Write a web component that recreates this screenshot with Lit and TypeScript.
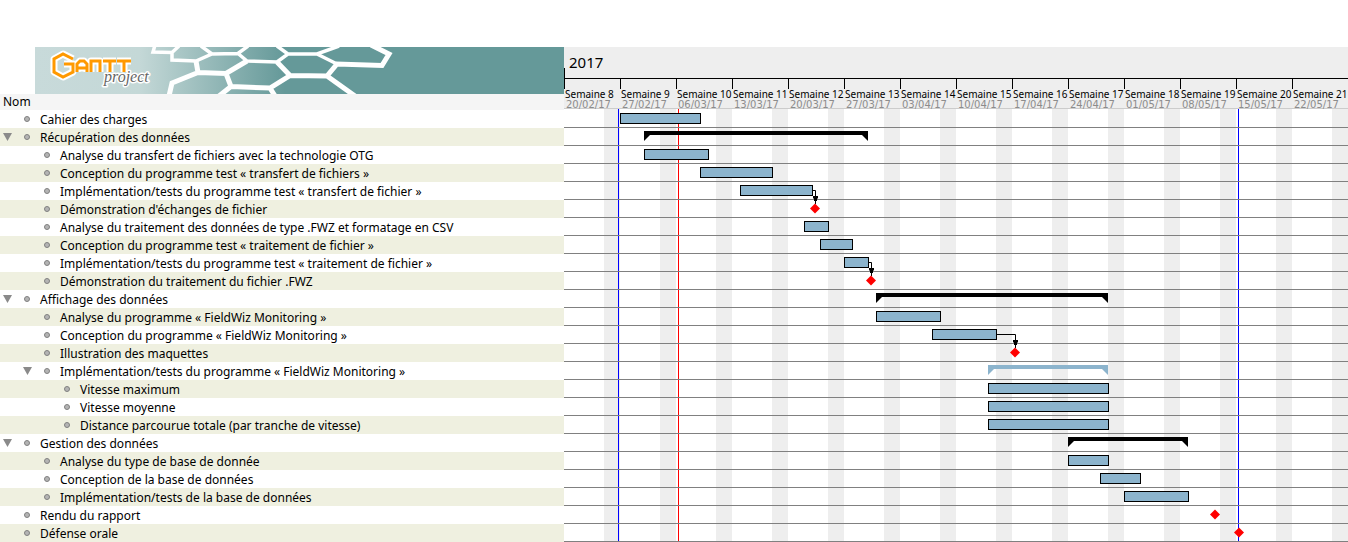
import { LitElement, html, css, svg, nothing } from "lit";
import { customElement, property, state } from "lit/decorators.js";
import { styleMap } from "lit/directives/style-map.js";
import { classMap } from "lit/directives/class-map.js";

type Kind = "task" | "summary" | "subsummary" | "milestone";

interface Task {
  name: string;
  level: number;
  kind: Kind;
  start: number;
  days: number;
  linkDays?: number;
}

const DAY = 8;

const task = (level: number, name: string, start: number, days: number, linkDays?: number): Task => ({
  name, level, kind: "task", start, days, linkDays,
});
const group = (level: number, name: string, start: number, days: number, kind: Kind = "summary"): Task => ({
  name, level, kind, start, days,
});
const milestone = (level: number, name: string, start: number): Task => ({
  name, level, kind: "milestone", start, days: 0,
});

const TASKS: Task[] = [
  task(0, "Cahier des charges", 7, 10),
  group(0, "Récupération des données", 10, 28),
  task(1, "Analyse du transfert de fichiers avec la technologie OTG", 10, 8),
  task(1, "Conception du programme test « transfert de fichiers »", 17, 9),
  task(1, "Implémentation/tests du programme test « transfert de fichier »", 22, 9, 31),
  milestone(1, "Démonstration d'échanges de fichier", 31),
  task(1, "Analyse du traitement des données de type .FWZ et formatage en CSV", 30, 3),
  task(1, "Conception du programme test « traitement de fichier »", 32, 4),
  task(1, "Implémentation/tests du programme test « traitement de fichier »", 35, 3, 38),
  milestone(1, "Démonstration du traitement du fichier .FWZ", 38),
  group(0, "Affichage des données", 39, 29),
  task(1, "Analyse du programme « FieldWiz Monitoring »", 39, 8),
  task(1, "Conception du programme « FieldWiz Monitoring »", 46, 8, 56),
  milestone(1, "Illustration des maquettes", 56),
  group(1, "Implémentation/tests du programme « FieldWiz Monitoring »", 53, 15, "subsummary"),
  task(2, "Vitesse maximum", 53, 15),
  task(2, "Vitesse moyenne", 53, 15),
  task(2, "Distance parcourue totale (par tranche de vitesse)", 53, 15),
  group(0, "Gestion des données", 63, 15),
  task(1, "Analyse du type de base de donnée", 63, 5),
  task(1, "Conception de la base de données", 67, 5),
  task(1, "Implémentation/tests de la base de données", 70, 8),
  milestone(0, "Rendu du rapport", 81),
  milestone(0, "Défense orale", 84),
];

const WEEKS = [
  "20/02/17", "27/02/17", "06/03/17", "13/03/17", "20/03/17", "27/03/17", "03/04/17",
  "10/04/17", "17/04/17", "24/04/17", "01/05/17", "08/05/17", "15/05/17", "22/05/17",
].map((date, i) => ({ label: `Semaine ${8 + i}`, date }));

@customElement("gantt-banner")
class GanttBanner extends LitElement {
  static styles = css`
    :host { display: block; padding-left: 35px; }
    .banner { display: block; width: 100%; height: 47px; }
    .project { font: italic 16px "Liberation Serif", serif; fill: #666; stroke: #fff; stroke-width: 3px; paint-order: stroke; stroke-linejoin: round; }
  `;
  render() {
    const far = "M120 -2 L118 5 L137 5.500 L144 -1 M137 5.500 V13 L161 14 L177 7 L203 6.500 L213 -1 M177 7 L166 -1 M203 6.500 L212 14 L242 15 L253 7 L242 -1 M253 7 H282 L304 -1 M282 7 L302 17";
    const near = "M134 49 L137 36 L163 25.500 L161 14 M163 25.500 L191 26.500 L212 14 M191 26.500 L196 39.500 L184 49 M196 39.500 L235 41 L255 28.500 L242 15 M235 41 L240 49 M255 28.500 L292 29 L302 17 L347 18.500 L354 7 L336 -2 M292 29 L320 49";
    const word = svg`
      <path d="M38 12 L28 7 L19 12 V25 L28 30 L38 25 V17 H29"></path>
      <path d="M42 25 V17 L45 14 H49 L52 17 V25 M42 21 H52"></path>
      <path d="M56 25 V14 H65 V25"></path>
      <path d="M68 14 H81 M75 14 V25"></path>
      <path d="M82 14 H96 M89 14 V25"></path>`;
    return html`
      <svg class="banner" viewBox="0 0 529 47" preserveAspectRatio="xMinYMin slice" role="img" aria-label="GanttProject">
        <defs>
          <linearGradient id="teal" gradientUnits="userSpaceOnUse" x1="0" x2="250" y1="0" y2="0">
            <stop offset="0" stop-color="#c8dada"></stop>
            <stop offset="0.42" stop-color="#c4d8d7"></stop>
            <stop offset="1" stop-color="#659999"></stop>
          </linearGradient>
        </defs>
        <rect width="529" height="47" fill="url(#teal)"></rect>
        <path d=${far} fill="none" stroke="#fff" stroke-width="3.500"></path>
        <path d=${near} fill="none" stroke="#fff" stroke-width="5"></path>
        <g fill="none" stroke="#fff" stroke-width="7" stroke-linejoin="round">${word}</g>
        <g fill="none" stroke="#f90" stroke-width="3">${word}</g>
        <text class="project" x="69" y="35">project</text>
      </svg>`;
  }
}

@customElement("gantt-shape")
class GanttShape extends LitElement {
  @property({ attribute: false }) item!: Task;

  static styles = css`
    :host { display: block; position: relative; height: 17px; border-bottom: 1px solid #808080; }
    .shape { position: absolute; top: 3px; box-sizing: border-box; }
    .task { height: 11px; background: #8cb4cd; border: 1px solid #000; }
    .summary, .subsummary { height: 4px; background: currentColor; color: #000; }
    .subsummary { color: #8cb4cd; }
    .summary::before, .summary::after, .subsummary::before, .subsummary::after {
      content: ""; position: absolute; top: 4px; width: 6px; height: 6px; background: currentColor;
    }
    .summary::before, .subsummary::before { left: 0; clip-path: polygon(0 0, 100% 0, 0 100%); }
    .summary::after, .subsummary::after { right: 0; clip-path: polygon(0 0, 100% 0, 100% 100%); }
    .diamond { position: absolute; top: 3px; width: 10px; height: 11px; z-index: 2; fill: #f00; }
    .link { position: absolute; top: 0; height: 24px; z-index: 1; overflow: visible; }
  `;

  render() {
    const { kind, start, days, linkDays } = this.item;
    const left = start * DAY;
    if (kind === "milestone") {
      return html`<svg class="diamond" style=${styleMap({ left: `${left - 2}px` })} viewBox="0 0 10 11">
        <path d="M5 0.500 L10 5.500 L5 10.500 L0 5.500Z"></path></svg>`;
    }
    const width = days * DAY + (kind === "task" ? 1 : 0);
    const end = left + width;
    const reach = linkDays === undefined ? 0 : linkDays * DAY + 3 - end;
    return html`
      <div class="shape ${kind}" style=${styleMap({ left: `${left}px`, width: `${width}px` })}></div>
      ${linkDays === undefined ? nothing : html`
        <svg class="link" width=${reach + 3} height="24" style=${styleMap({ left: `${end}px` })}>
          <path d="M0 8.500 H${reach + 0.5} V22" fill="none" stroke="#000"></path>
          <path d="M${reach - 2} 14 h5 v2 l-1 1 v2 h-3 v-2 l-1 -1z"></path>
        </svg>`}`;
  }
}

@customElement("app-root")
class AppRoot extends LitElement {
  @state() private closed = new Set<string>();

  static styles = css`
    :host { display: block; padding-top: 47px; background: #fff; color: #000; font: 12px/18px "Noto Sans", "Open Sans", sans-serif; }
    .gantt { display: grid; grid-template-columns: 564px minmax(0, 1fr); }
    .tree { width: 100%; border-collapse: collapse; }
    .tree th { height: 16px; padding: 0 3px; line-height: 14px; font-weight: 400; text-align: left; background: #f5f5f5; }
    .tree td { height: 18px; padding: 0; }
    .tree tbody tr:nth-child(even) { background: #eff0e0; }
    .cell { display: flex; align-items: center; height: 18px; white-space: nowrap; }
    .name { padding-top: 2px; line-height: 16px; }
    .indent1 { padding-left: 20px; }
    .indent2 { padding-left: 40px; }
    .toggle { width: 16px; height: 18px; padding: 0 0 0 3px; border: 0; background: none; display: flex; align-items: center; cursor: pointer; }
    .arrow { width: 9px; height: 8px; fill: #8a8a8a; }
    .shut { transform: rotate(-90deg); }
    .gap { width: 16px; }
    .dot { width: 6px; height: 6px; margin: 0 10px 0 8px; box-sizing: border-box; border-radius: 50%; border: 1px solid #808080; background: #b4b4b4; }
    .chart { overflow: hidden; }
    .head { position: relative; height: 61px; background: #eee; border-bottom: 1px solid #ccc; }
    .head::before { content: ""; position: absolute; left: 0; top: 21px; width: 1px; height: 21px; background: #000; }
    .year { height: 32px; box-sizing: border-box; padding-left: 5px; border-bottom: 1px solid #000; font-size: 15px; line-height: 31px; }
    .weeks { display: flex; }
    .week { flex: none; width: 56px; height: 29px; box-sizing: border-box; padding-top: 9px; font-size: 10px; line-height: 12px; white-space: nowrap;
      background: linear-gradient(#000, #000) 0 0 / 1px 10px no-repeat; }
    .label { display: block; padding-left: 1px; }
    .date { display: block; padding-left: 2px; color: #8c8c8c; font: 10px/10px "DejaVu Sans", sans-serif; }
    .body { position: relative; padding-top: 1px;
      background: repeating-linear-gradient(90deg, transparent 0 40px, #eee 40px 56px); }
    .mark { position: absolute; top: 0; bottom: 0; width: 1px; background: #00f; }
    .today { background: #f00; }
  `;

  private toggle(name: string) {
    const next = new Set(this.closed);
    if (!next.delete(name)) next.add(name);
    this.closed = next;
  }

  private get visible(): Task[] {
    let hidden = Infinity;
    return TASKS.filter((t) => {
      if (t.level > hidden) return false;
      hidden = this.closed.has(t.name) ? t.level : Infinity;
      return true;
    });
  }

  private row(t: Task) {
    const isGroup = t.kind === "summary" || t.kind === "subsummary";
    const shut = this.closed.has(t.name);
    return html`<tr><td><div class="cell indent${t.level}">
      ${isGroup
        ? html`<button class="toggle" aria-label=${t.name} aria-expanded=${!shut} @click=${() => this.toggle(t.name)}>
            <svg class=${classMap({ arrow: true, shut })} viewBox="0 0 9 8"><path d="M0 0 H9 L4.5 8Z"></path></svg>
          </button>`
        : html`<span class="gap"></span>`}
      <span class="dot"></span><span class="name">${t.name}</span>
    </div></td></tr>`;
  }

  render() {
    const rows = this.visible;
    const marks = [54, 674];
    return html`
      <main class="gantt">
        <section>
          <gantt-banner></gantt-banner>
          <table class="tree">
            <thead><tr><th scope="col">Nom</th></tr></thead>
            <tbody>${rows.map((t) => this.row(t))}</tbody>
          </table>
        </section>
        <section class="chart">
          <div class="head">
            <div class="year">2017</div>
            <div class="weeks">
              ${WEEKS.map((w) => html`<div class="week"><span class="label">${w.label}</span><span class="date">${w.date}</span></div>`)}
            </div>
          </div>
          <div class="body">
            ${marks.map((x) => html`<div class="mark" style=${styleMap({ left: `${x}px` })}></div>`)}
            <div class="mark today" style=${styleMap({ left: "114px" })}></div>
            ${rows.map((t) => html`<gantt-shape .item=${t}></gantt-shape>`)}
          </div>
        </section>
      </main>`;
  }
}
